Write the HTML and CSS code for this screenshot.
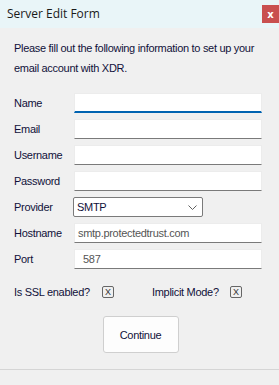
FILE: index.html
```html
<!DOCTYPE html>
<html>
<head>
<meta charset="utf-8">
<link rel="stylesheet" href="styles.css">
</head>
<body>
<div class="window">
  <div class="titlebar">
    <span class="title">Server Edit Form</span>
    <span class="close">x</span>
  </div>
  <div class="content">
    <p class="intro">Please fill out the following information to set up your email account with XDR.</p>
    <div class="form">
      <label class="lbl">Name</label>
      <div class="field focused"></div>
      <label class="lbl">Email</label>
      <div class="field"></div>
      <label class="lbl">Username</label>
      <div class="field"></div>
      <label class="lbl">Password</label>
      <div class="field"></div>
      <label class="lbl">Provider</label>
      <div class="select"><span>SMTP</span>
        <svg class="chev" width="9" height="5" viewBox="0 0 9 5"><path d="M0.5 0.5 L4.5 4.5 L8.5 0.5" fill="none" stroke="#606060" stroke-width="1"/></svg>
      </div>
      <label class="lbl">Hostname</label>
      <div class="field value">smtp.protectedtrust.com</div>
      <label class="lbl">Port</label>
      <div class="field value port">587</div>
    </div>
    <div class="checks">
      <span class="ck-lbl">Is SSL enabled?</span><span class="box">X</span>
      <span class="ck-lbl second">Implicit Mode?</span><span class="box">X</span>
    </div>
    <div class="actions">
      <div class="button">Continue</div>
    </div>
  </div>
  <div class="footer"></div>
</div>
</body>
</html>
```
FILE: styles.css
```css
html, body {
  margin: 0;
  padding: 0;
  background: #f0f0f0;
}
.window {
  width: 279px;
  height: 385px;
  background: #f0f0f0;
  font-family: "Liberation Sans", Arial, sans-serif;
  letter-spacing: -0.3px;
  color: #111;
  overflow: hidden;
}
.titlebar {
  height: 28px;
  background: #e9f5f8;
  display: flex;
  align-items: center;
  justify-content: space-between;
  letter-spacing: 0;
}
.title {
  font-family: "Open Sans", "Noto Sans", sans-serif;
  font-size: 12px;
  color: #1a1a1a;
  padding-left: 7px;
  margin-top: -2px;
}
.close {
  width: 17px;
  height: 18px;
  background: #c94f4f;
  color: #fff;
  font-weight: bold;
  font-size: 10px;
  font-family: "DejaVu Sans", sans-serif;
  display: flex;
  align-items: center;
  justify-content: center;
}
.content {
  padding: 0 17px 0 14px;
}
.intro {
  margin: 10px -10px 0 0;
  font-size: 11px;
  line-height: 20px;
  color: #10103a;
}
.form {
  margin-top: 15px;
  display: grid;
  grid-template-columns: 60px 1fr;
  row-gap: 6px;
  align-items: center;
}
.lbl {
  font-size: 11px;
  color: #10103a;
}
.field {
  background: #fff;
  border: 1px solid #ececec;
  border-bottom: 1px solid #7a7a7a;
  box-sizing: border-box;
  height: 20px;
  font-size: 11px;
  line-height: 18px;
  padding-left: 3px;
}
.field.focused {
  border-bottom: 2px solid #0063b1;
}
.field.value {
  color: #555;
}
.field.port {
  padding-left: 8px;
}
.select {
  width: 130px;
  margin-left: -1px;
  height: 20px;
  box-sizing: border-box;
  background: #fff;
  border: 1px solid #7a7a7a;
  border-radius: 2px;
  display: flex;
  align-items: center;
  justify-content: space-between;
  padding: 0 5px 0 3px;
  font-size: 11px;
  color: #10103a;
}
.chev {
  display: block;
  margin-top: 1px;
}
.checks {
  margin-top: 16px;
  display: flex;
  align-items: center;
  height: 14px;
  font-size: 11px;
  color: #10103a;
}
.ck-lbl {
  width: 88px;
  flex: none;
}
.ck-lbl.second {
  margin-left: 38px;
  width: 78px;
}
.box {
  flex: none;
  width: 12px;
  height: 12px;
  box-sizing: border-box;
  border: 1px solid #666;
  border-radius: 2px;
  font-size: 9px;
  line-height: 10px;
  text-align: center;
  color: #333;
  letter-spacing: 0;
}
.actions {
  margin-top: 17px;
  display: flex;
  justify-content: center;
  padding-left: 5px;
}
.button {
  width: 76px;
  height: 37px;
  box-sizing: border-box;
  background: #fdfdfd;
  border: 1px solid #cfcfcf;
  border-radius: 3px;
  display: flex;
  align-items: center;
  justify-content: center;
  font-size: 11px;
  color: #10103a;
}
.footer {
  margin-top: 16px;
  border-top: 1px solid #d5d5d5;
}
```
